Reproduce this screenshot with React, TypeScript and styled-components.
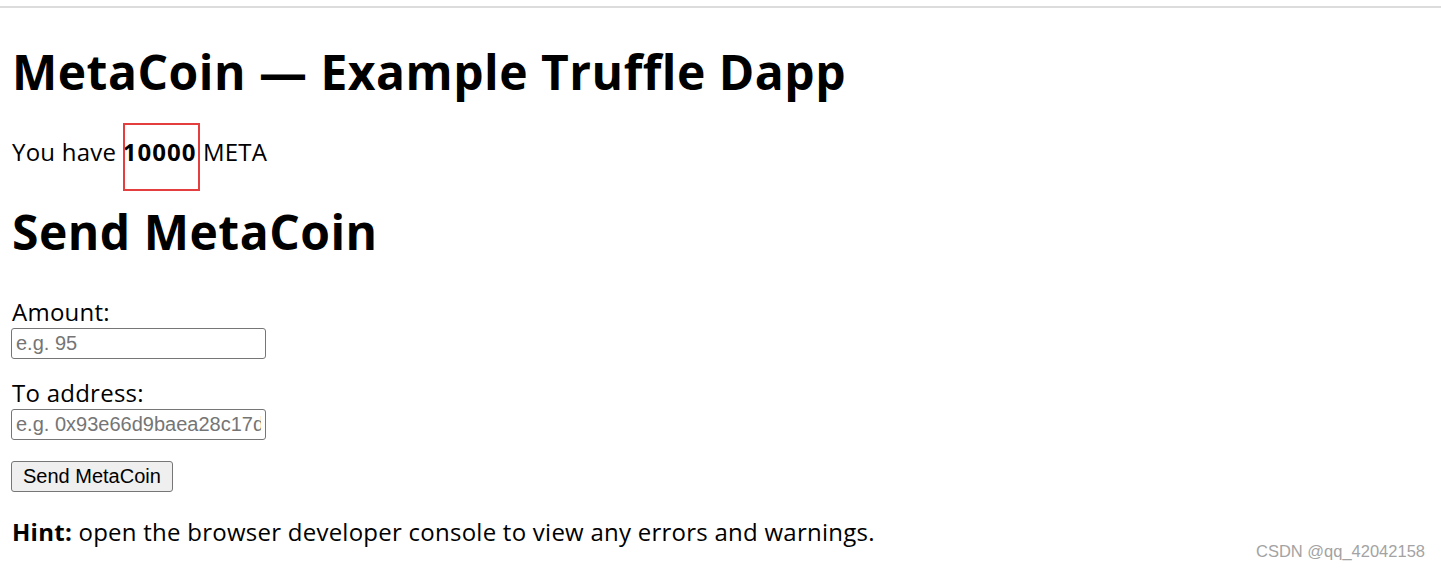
import React from 'react';
import styled, { createGlobalStyle } from 'styled-components';

const GlobalStyle = createGlobalStyle`
    html, body {
        margin: 0;
        padding: 0;
        background: #fff;
    }
    body {
        font-family: "Open Sans", "Noto Sans", sans-serif;
        color: #000;
    }
`;

const Page = styled.div`
    position: relative;
    height: 571px;
    overflow: hidden;
`;

const TopRule = styled.div`
    height: 2px;
    margin-top: 6px;
    background: #dcdcdc;
`;

const Content = styled.main`
    display: flex;
    flex-direction: column;
    align-items: flex-start;
    padding: 0 12px;
`;

const Heading = styled.h1<{ $top: number }>`
    font-size: 48px;
    line-height: 64px;
    font-weight: 700;
    letter-spacing: 0.5px;
    margin: ${p => p.$top}px 0 0;
    white-space: nowrap;
`;

const Text = styled.p<{ $top: number }>`
    font-size: 24px;
    line-height: 32px;
    letter-spacing: 0.25px;
    margin: ${p => p.$top}px 0 0;
    white-space: nowrap;
`;

const Balance = styled.strong`
    position: relative;
    font-weight: 700;
    letter-spacing: 1px;
`;

const Highlight = styled.span`
    position: absolute;
    left: 0;
    top: -12px;
    width: 77px;
    height: 68px;
    box-sizing: border-box;
    border: 2px solid #e53e3e;
    pointer-events: none;
`;

const Label = styled.label<{ $top: number }>`
    font-size: 24px;
    line-height: 32px;
    letter-spacing: 0.25px;
    margin-top: ${p => p.$top}px;
`;

const Input = styled.input`
    box-sizing: border-box;
    width: 255px;
    height: 31px;
    margin: 0 0 0 -1px;
    padding: 0 4px;
    border: 1px solid #767676;
    border-radius: 3px;
    font-family: "Liberation Sans", Arial, sans-serif;
    font-size: 20px;
    color: #000;
    background: #fff;

    &::placeholder {
        color: #757575;
    }
`;

const Button = styled.button`
    box-sizing: border-box;
    height: 31px;
    margin: 21px 0 0 -1px;
    padding: 0 11px;
    border: 1px solid #767676;
    border-radius: 3px;
    background: #efefef;
    font-family: "Liberation Sans", Arial, sans-serif;
    font-size: 20px;
    color: #000;
`;

const Watermark = styled.div`
    position: absolute;
    right: 16px;
    bottom: 10px;
    font-family: "Liberation Sans", Arial, sans-serif;
    font-size: 16.5px;
    color: #a3a3a3;
`;

const App: React.FC = () => {
    return (
        <Page>
            <GlobalStyle />
            <TopRule />
            <Content>
                <Heading $top={32}>MetaCoin — Example Truffle Dapp</Heading>
                <Text $top={32}>
                    You have <Balance>10000<Highlight /></Balance> META
                </Text>
                <Heading $top={32}>Send MetaCoin</Heading>

                <Label $top={32} htmlFor='amount'>Amount:</Label>
                <Input id='amount' type='text' placeholder='e.g. 95' />

                <Label $top={18} htmlFor='receiver'>To address:</Label>
                <Input
                    id='receiver'
                    type='text'
                    placeholder='e.g. 0x93e66d9baea28c17d9fc393b53e3fbdd76899dae'
                />

                <Button>Send MetaCoin</Button>

                <Text $top={24}>
                    <strong>Hint:</strong> open the browser developer console to view any errors and warnings.
                </Text>
            </Content>
            <Watermark>CSDN @qq_42042158</Watermark>
        </Page>
    );
};

export default App;
